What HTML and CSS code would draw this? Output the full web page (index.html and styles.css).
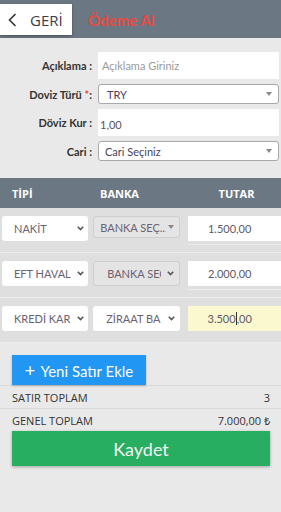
FILE: index.html
```html
<!DOCTYPE html>
<html>

<head>
  <meta charset="UTF-8">
  <title>Ödeme Al</title>
  <link rel="stylesheet" href="styles.css">
</head>

<body>
  <div class="topbar">
    <a class="back">
      <svg width="9" height="14" viewBox="0 0 9 14"><path d="M7.5 1 L1.5 7 L7.5 13" fill="none" stroke="#333" stroke-width="1.6"/></svg>
      <span>GERİ</span>
    </a>
    <span class="title">Ödeme Al</span>
  </div>

  <div class="form">
    <label>Açıklama :</label>
    <div class="text-field placeholder">Açıklama Giriniz</div>

    <label>Doviz Türü <span class="req">*</span>:</label>
    <div class="select-field">
      <span class="val-try">TRY</span>
      <svg width="6" height="4" viewBox="0 0 6 4"><path d="M0 0 H6 L3 4 Z" fill="#888"/></svg>
    </div>

    <label>Döviz Kur :</label>
    <div class="text-field kur">1,00</div>

    <label>Cari :</label>
    <div class="select-field">
      <span class="val-cari">Cari Seçiniz</span>
      <svg width="6" height="4" viewBox="0 0 6 4"><path d="M0 0 H6 L3 4 Z" fill="#888"/></svg>
    </div>
  </div>

  <div class="thead">
    <div class="col-type">TİPİ</div>
    <div class="col-bank">BANKA</div>
    <div class="col-amount">TUTAR</div>
  </div>

  <div class="row">
    <div class="cell type">
      <span>NAKİT</span>
      <svg class="chev" width="7" height="5" viewBox="0 0 7 5"><path d="M0.8 0.8 L3.5 3.6 L6.2 0.8" fill="none" stroke="#555" stroke-width="1.6"/></svg>
    </div>
    <div class="cell bank disabled short">
      <span>BANKA SEÇ...</span>
      <svg width="6" height="4" viewBox="0 0 6 4"><path d="M0 0 H6 L3 4 Z" fill="#888"/></svg>
    </div>
    <div class="amount-wrap">
      <div class="amount">1.500,00</div>
    </div>
  </div>

  <div class="row">
    <div class="cell type">
      <span>EFT HAVAL</span>
      <svg class="chev" width="7" height="5" viewBox="0 0 7 5"><path d="M0.8 0.8 L3.5 3.6 L6.2 0.8" fill="none" stroke="#555" stroke-width="1.6"/></svg>
    </div>
    <div class="cell bank disabled">
      <span>BANKA SEÇ</span>
      <svg class="chev" width="7" height="5" viewBox="0 0 7 5"><path d="M0.8 0.8 L3.5 3.6 L6.2 0.8" fill="none" stroke="#555" stroke-width="1.6"/></svg>
    </div>
    <div class="amount-wrap">
      <div class="amount">2.000,00</div>
    </div>
  </div>

  <div class="row">
    <div class="cell type">
      <span>KREDİ KAR</span>
      <svg class="chev" width="7" height="5" viewBox="0 0 7 5"><path d="M0.8 0.8 L3.5 3.6 L6.2 0.8" fill="none" stroke="#555" stroke-width="1.6"/></svg>
    </div>
    <div class="cell bank">
      <span>ZİRAAT BA</span>
      <svg class="chev" width="7" height="5" viewBox="0 0 7 5"><path d="M0.8 0.8 L3.5 3.6 L6.2 0.8" fill="none" stroke="#555" stroke-width="1.6"/></svg>
    </div>
    <div class="amount-wrap editing">
      <div class="amount active">3.500<span class="caret"></span>,00</div>
    </div>
  </div>

  <div class="add-area">
    <button class="btn-add"><span class="plus">+</span> Yeni Satır Ekle</button>
  </div>

  <div class="totals">
    <div class="total-row line">
      <span>SATIR TOPLAM</span>
      <span>3</span>
    </div>
    <div class="total-row">
      <span>GENEL TOPLAM</span>
      <span>7.000,00 ₺</span>
    </div>
    <button class="btn-save">Kaydet</button>
  </div>
</body>
</html>
```

FILE: styles.css
```css
body {
  margin: 0;
  width: 281px;
  height: 512px;
  overflow: hidden;
  background-color: #e9e9e9;
  font-family: Lato, "Open Sans", sans-serif;
  color: #333;
}

.topbar {
  height: 38px;
  background-color: #6b7884;
  display: flex;
  align-items: center;
  gap: 16px;
}

.back {
  height: 31px;
  width: 72px;
  box-sizing: border-box;
  padding-left: 8px;
  margin-top: 1px;
  background-color: #fff;
  display: flex;
  align-items: center;
  gap: 13px;
  box-shadow: 0 1px 3px rgba(0, 0, 0, 0.35);
  font-family: "Open Sans", sans-serif;
  font-size: 15px;
  color: #3c3c4a;
}

.title {
  color: #e9483f;
  font-weight: bold;
  font-size: 15px;
  margin-top: 1px;
}

.form {
  display: grid;
  grid-template-columns: 92px 181px;
  column-gap: 6px;
  row-gap: 5px;
  align-items: center;
  padding-top: 14px;
}

.form label {
  text-align: right;
  font-weight: bold;
  font-size: 11px;
  color: #333;
}

.req {
  color: #e9483f;
}

.text-field {
  height: 27px;
  box-sizing: border-box;
  background-color: #fff;
  padding-left: 4px;
  display: flex;
  align-items: center;
  font-size: 11px;
  color: #555;
}

.placeholder {
  color: #9a9a9a;
}

.kur {
  padding-left: 2px;
  padding-top: 3px;
}

.select-field {
  height: 20px;
  box-sizing: border-box;
  background-color: #fff;
  border: 1px solid #a9a9a9;
  border-radius: 3px;
  padding: 0 6px 0 8px;
  display: flex;
  align-items: center;
  justify-content: space-between;
  font-size: 11px;
  color: #4a3f5a;
}

.val-cari {
  margin-left: -2px;
}

.thead {
  margin-top: 17px;
  height: 30px;
  background-color: #6b7884;
  display: flex;
  align-items: center;
  padding-left: 2px;
  font-family: "Open Sans", sans-serif;
  font-weight: bold;
  font-size: 11px;
  color: #fff;
}

.col-type {
  width: 78px;
  padding-left: 10px;
}

.col-bank {
  width: 84px;
  margin-left: 5px;
  padding-left: 5px;
}

.col-amount {
  width: 89px;
  margin-left: 8px;
  text-align: center;
}

.row {
  display: flex;
  align-items: flex-start;
  padding: 8px 0 7px 2px;
  background-color: #dfdfdf;
  border-bottom: 1px solid #ececec;
}

.cell {
  height: 25px;
  box-sizing: border-box;
  background-color: #fff;
  border-radius: 3px;
  display: flex;
  align-items: center;
  justify-content: space-between;
  font-size: 11px;
  color: #6a6272;
  white-space: nowrap;
  overflow: hidden;
}

.cell span {
  overflow: hidden;
  flex: 1;
}

.cell svg {
  flex-shrink: 0;
}

.type {
  width: 88px;
  padding: 0 4px 0 12px;
}

.type span {
  margin-right: 6px;
}

.bank {
  width: 89px;
  margin-left: 5px;
  padding: 0 5px 0 13px;
}

.bank span {
  margin-right: 6px;
}

.disabled {
  background-color: #e4e4e4;
  border: 1px solid #cfcfcf;
}

.short {
  height: 22px;
  padding: 0 5px 0 6px;
}

.short span {
  margin-right: 2px;
}

.amount-wrap {
  margin-left: 8px;
  width: 95px;
  padding-bottom: 3px;
  border-bottom: 1px solid #ececec;
}

.amount-wrap.editing {
  border-bottom-color: transparent;
}

.amount {
  height: 25px;
  box-sizing: border-box;
  padding-right: 10px;
  background-color: #fff;
  display: flex;
  align-items: center;
  justify-content: center;
  font-size: 11px;
  color: #5e5868;
}

.amount.active {
  background-color: #fbf8cf;
}

.caret {
  display: inline-block;
  width: 1px;
  height: 13px;
  background-color: #333;
}

.add-area {
  padding: 12px 12px 0;
  border-bottom: 1px solid #d9d9d9;
  height: 30px;
}

button {
  border: none;
  font-family: Lato, "Open Sans", sans-serif;
  cursor: pointer;
}

.btn-add {
  height: 30px;
  width: 134px;
  background-color: #2196f3;
  color: #fff;
  font-size: 15px;
  padding: 0;
  box-shadow: 0 1px 2px rgba(0, 0, 0, 0.25);
}

.plus {
  font-size: 18px;
  margin-right: 2px;
}

.totals {
  display: flex;
  flex-direction: column;
}

.total-row {
  height: 22px;
  box-sizing: border-box;
  padding: 0 11px 3px 12px;
  display: flex;
  align-items: flex-end;
  justify-content: space-between;
  font-family: "Open Sans", sans-serif;
  font-size: 11px;
  color: #333;
}

.total-row.line {
  height: 23px;
  border-bottom: 1px solid #d9d9d9;
}

.btn-save {
  margin: 0 11px 0 12px;
  height: 35px;
  background-color: #27ae60;
  color: #f2f2f2;
  font-size: 18px;
  box-shadow: 0 1px 3px rgba(0, 0, 0, 0.3);
}
```
